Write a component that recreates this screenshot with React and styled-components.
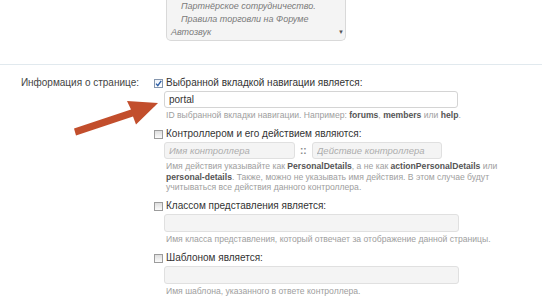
import React from "react";
import styled, { createGlobalStyle } from "styled-components";

const GlobalStyle = createGlobalStyle`
  body {
    margin: 0;
    background: #fff;
    font-family: "Liberation Sans", Arial, sans-serif;
    overflow: hidden;
  }
`;

const Page = styled.div`
  position: relative;
  width: 542px;
  height: 300px;
  overflow: hidden;
`;

const Row = styled.div`
  display: grid;
  grid-template-columns: 139px 1fr;
  column-gap: 15px;
`;

const TopRow = styled(Row)`
  padding-bottom: 23px;
`;

const ListBox = styled.div`
  position: relative;
  margin-left: 12px;
  width: 180px;
  box-sizing: border-box;
  background: #f4f4f4;
  border: 1px solid #d9d9d9;
  border-top: none;
  border-radius: 0 0 5px 5px;
  padding: 0 4px 1px;
`;

const ListItem = styled.div`
  font-size: 9px;
  line-height: 13px;
  font-style: italic;
  color: #7a7a7a;
  padding-left: ${(p) => (p.$nested ? "10px" : "0")};
  white-space: nowrap;
`;

const ScrollArrow = styled.span`
  position: absolute;
  right: 1px;
  bottom: 4px;
  font-size: 6px;
  color: #555;
  line-height: 7px;
`;

const Divider = styled.div`
  height: 1px;
  background: #e1e9ee;
`;

const FormRow = styled(Row)`
  padding-top: 11px;
`;

const RowLabel = styled.div`
  text-align: right;
  font-size: 10px;
  line-height: 14px;
  color: #444;
  white-space: nowrap;
`;

const Option = styled.div`
  & + & {
    margin-top: 6.5px;
  }
`;

const CheckLine = styled.label`
  display: flex;
  align-items: center;
  gap: 3px;
  height: 14px;
`;

const Box = styled.span`
  width: 9px;
  height: 9px;
  box-sizing: border-box;
  border: 1px solid ${(p) => (p.$checked ? "#8596ad" : "#9c9c9c")};
  background: ${(p) =>
    p.$checked
      ? "linear-gradient(#eef3f9, #ffffff)"
      : "linear-gradient(#dedede, #fbfbfb)"};
  display: flex;
  align-items: center;
  justify-content: center;
`;

const OptionTitle = styled.span`
  font-size: 10px;
  line-height: 14px;
  color: #333;
  white-space: nowrap;
`;

const Fields = styled.div`
  margin-left: 10px;
  margin-top: 1px;
  display: flex;
  align-items: center;
  gap: 4px;
`;

const TextBox = styled.input`
  box-sizing: border-box;
  width: ${(p) => p.$w}px;
  height: ${(p) => p.$h || 17}px;
  margin: 0;
  padding: 0 4px;
  border: 1px solid ${(p) => (p.disabled ? "#e0e0e0" : "#d4d4d4")};
  border-radius: 3px;
  background: ${(p) => (p.disabled ? "#f4f4f4" : "#fff")};
  font-family: "Liberation Sans", Arial, sans-serif;
  font-size: 10px;
  color: #333;
  outline: none;
  &::placeholder {
    color: #adadad;
    font-style: italic;
    font-size: 9.5px;
  }
`;

const Sep = styled.span`
  font-size: 10px;
  font-weight: bold;
  color: #888;
  padding: 0 1px;
`;

const Hint = styled.div`
  margin: 2px 0 0 12px;
  font-size: 8.6px;
  line-height: 10.5px;
  color: #9e9e9e;
  white-space: nowrap;
  b {
    color: #555;
  }
`;

const Arrow = styled.svg`
  position: absolute;
  left: 0;
  top: 0;
  pointer-events: none;
`;

function Check({ checked }) {
  return (
    <Box $checked={checked}>
      {checked && (
        <svg width="7" height="7" viewBox="0 0 7 7">
          <path d="M1 3.6 L2.8 5.6 L6.2 0.8" fill="none" stroke="#2d5fa6" strokeWidth="1.4" />
        </svg>
      )}
    </Box>
  );
}

export default function App() {
  return (
    <>
      <GlobalStyle />
      <Page>
        <TopRow>
          <span />
          <ListBox>
            <ListItem $nested>Партнёрское сотрудничество.</ListItem>
            <ListItem $nested>Правила торговли на Форуме</ListItem>
            <ListItem>Автозвук</ListItem>
            <ScrollArrow>▼</ScrollArrow>
          </ListBox>
        </TopRow>
        <Divider />
        <FormRow>
          <RowLabel>Информация о странице:</RowLabel>
          <div>
            <Option>
              <CheckLine>
                <Check checked />
                <OptionTitle>Выбранной вкладкой навигации является:</OptionTitle>
              </CheckLine>
              <Fields>
                <TextBox $w={294} value="portal" readOnly />
              </Fields>
              <Hint>
                ID выбранной вкладки навигации. Например: <b>forums</b>, <b>members</b> или <b>help</b>.
              </Hint>
            </Option>
            <Option>
              <CheckLine>
                <Check />
                <OptionTitle>Контроллером и его действием являются:</OptionTitle>
              </CheckLine>
              <Fields>
                <TextBox $w={131} disabled placeholder="Имя контроллера" />
                <Sep>::</Sep>
                <TextBox $w={130} disabled placeholder="Действие контроллера" />
              </Fields>
              <Hint>
                Имя действия указывайте как <b>PersonalDetails</b>, а не как <b>actionPersonalDetails</b> или
                <br />
                <b>personal-details</b>. Также, можно не указывать имя действия. В этом случае будут
                <br />
                учитываться все действия данного контроллера.
              </Hint>
            </Option>
            <Option>
              <CheckLine>
                <Check />
                <OptionTitle>Классом представления является:</OptionTitle>
              </CheckLine>
              <Fields>
                <TextBox $w={295} $h={18} disabled />
              </Fields>
              <Hint>Имя класса представления, который отвечает за отображение данной страницы.</Hint>
            </Option>
            <Option>
              <CheckLine>
                <Check />
                <OptionTitle>Шаблоном является:</OptionTitle>
              </CheckLine>
              <Fields>
                <TextBox $w={295} $h={18} disabled />
              </Fields>
              <Hint>Имя шаблона, указанного в ответе контроллера.</Hint>
            </Option>
          </div>
        </FormRow>
        <Arrow width="548" height="300" viewBox="0 0 548 300">
          <polygon
            points="74,128.5 131,109.5 127,101 158,103 136,124.5 133,116.5 76,135.5"
            fill="#c24e2c"
            strokeLinejoin="round"
          />
        </Arrow>
      </Page>
    </>
  );
}
